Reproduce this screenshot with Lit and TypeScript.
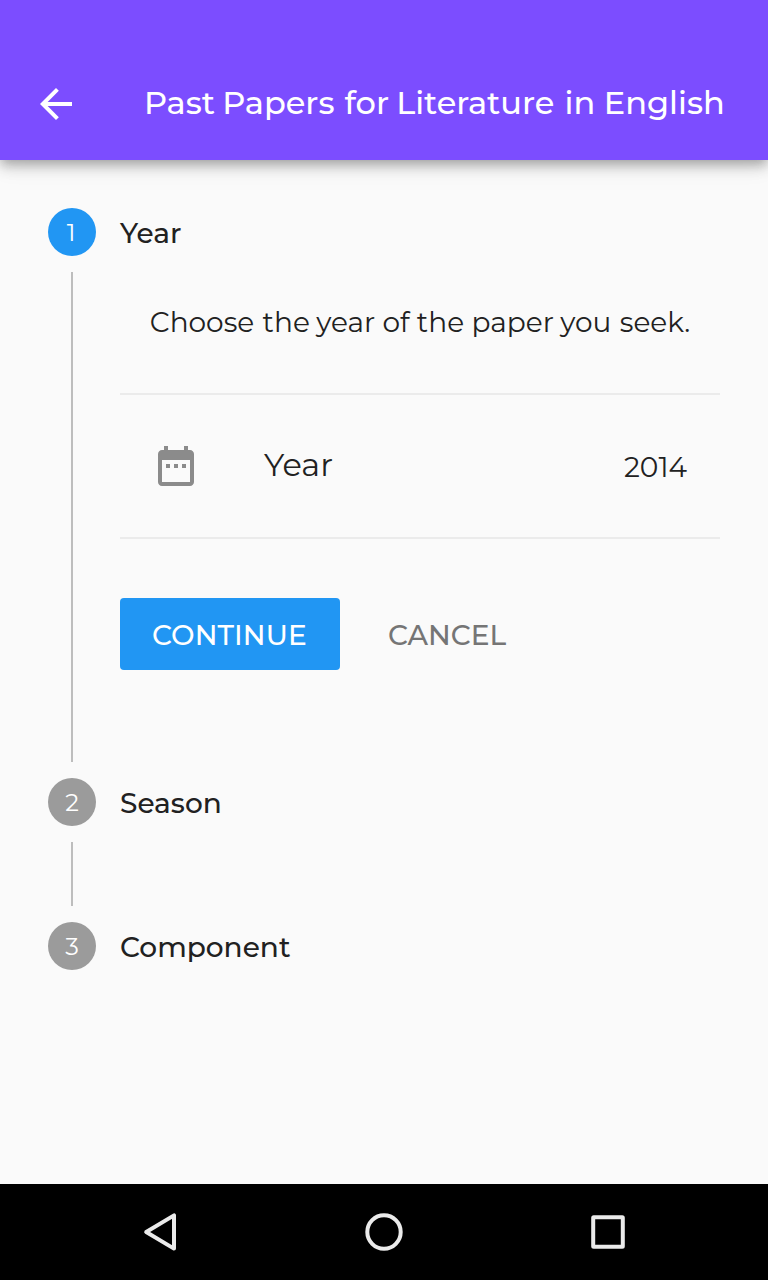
import { LitElement, html, css } from "lit";
import { customElement } from "lit/decorators.js";

@customElement("app-root")
export class AppRoot extends LitElement {
  static styles = css`
    :host {
      display: flex;
      flex-direction: column;
      height: 100vh;
      min-height: 1280px;
      background: #fafafa;
      color: #212121;
      font-family: Montserrat, Inter, sans-serif;
      font-size: 28px;
      line-height: 34px;
      white-space: nowrap;
    }
    * { box-sizing: border-box; }
    svg { display: block; flex: none; }
    .bar {
      display: flex;
      align-items: center;
      height: 160px;
      padding: 48px 32px 0;
      background: #7c4dff;
      color: #fff;
      box-shadow: 0 4px 10px -2px rgba(0,0,0,.2), 0 8px 12px rgba(0,0,0,.14), 0 2px 24px rgba(0,0,0,.12);
    }
    .title {
      margin: 0 0 2px 64px;
      font-size: 32px;
      line-height: 40px;
      font-weight: 500;
    }
    .title .tight { word-spacing: -1.5px; }
    .title .loose { word-spacing: 1.5px; }
    .hint .tight { word-spacing: -1px; }
    .hint .loose { word-spacing: 1px; }
    .steps { flex: 1; padding: 48px; }
    .step { display: grid; grid-template-columns: 48px 1fr; column-gap: 24px; }
    .rail { display: flex; flex-direction: column; align-items: center; }
    .dot {
      width: 48px;
      height: 48px;
      border-radius: 50%;
      background: #9b9b9b;
      color: #fff;
      font-size: 24px;
      font-weight: 400;
      line-height: 49px;
      text-align: center;
    }
    .dot.on { padding-right: 2px; background: #2196f3; }
    .line { flex: 1; width: 2px; margin: 16px 0; background: #bdbdbd; }
    .name { height: 48px; line-height: 50px; font-weight: 500; }
    .first { height: 570px; }
    .second { height: 144px; }
    .hint { padding: 49px 0 54px; text-align: center; font-weight: 400; }
    .field {
      display: flex;
      align-items: center;
      height: 146px;
      padding: 0 33px 0 32px;
      border-top: 2px solid #ebebeb;
      border-bottom: 2px solid #ebebeb;
      font-weight: 400;
    }
    .label { flex: 1; margin: 0 0 2px 64px; font-size: 32px; }
    .value { margin-top: 2px; }
    .actions { display: flex; padding-top: 59px; font-weight: 500; }
    .btn {
      height: 72px;
      border: 0;
      padding: 2px 32px 0;
      background: none;
      font: inherit;
      text-align: left;
      color: #757575;
    }
    .btn.main { width: 220px; margin-right: 16px; border-radius: 4px; background: #2196f3; color: #fff; letter-spacing: 0.1px; }
    .nav {
      display: flex;
      justify-content: center;
      align-items: center;
      gap: 176px;
      height: 96px;
      background: #000;
    }
    .nav svg { fill: none; stroke: #ebebeb; stroke-width: 4; stroke-linejoin: round; }
  `;

  render() {
    return html`
      <header class="bar">
        <svg width="48" height="48" viewBox="0 0 24 24" fill="#fff"><path d="M20 11H7.83l5.59-5.59L12 4l-8 8 8 8 1.41-1.41L7.83 13H20v-2z"/></svg>
        <div class="title"><span class="tight">Past </span><span class="loose">Papers </span><span class="tight">for </span><span class="loose">Literature </span>in English</div>
      </header>
      <main class="steps">
        <section class="step first">
          <div class="rail"><div class="dot on">1</div><div class="line"></div></div>
          <div>
            <div class="name">Year</div>
            <div class="hint"><span class="loose">Choose </span><span class="tight">the </span>year of the <span class="tight">paper </span><span class="loose">you </span>seek.</div>
            <div class="field">
              <svg width="48" height="48" viewBox="0 0 24 24" fill="#8b8b8b"><path d="M9 11H7v2h2v-2zm4 0h-2v2h2v-2zm4 0h-2v2h2v-2zm2-7h-1V2h-2v2H8V2H6v2H5c-1.11 0-1.99.9-1.99 2L3 20c0 1.1.89 2 2 2h14c1.1 0 2-.9 2-2V6c0-1.1-.9-2-2-2zm0 16H5V9h14v11z"/></svg>
              <span class="label">Year</span><span class="value">2014</span>
            </div>
            <div class="actions">
              <button class="btn main">CONTINUE</button><button class="btn">CANCEL</button>
            </div>
          </div>
        </section>
        <section class="step second">
          <div class="rail"><div class="dot">2</div><div class="line"></div></div>
          <div class="name">Season</div>
        </section>
        <section class="step">
          <div class="rail"><div class="dot">3</div></div>
          <div class="name">Component</div>
        </section>
      </main>
      <nav class="nav">
        <svg width="48" height="48" viewBox="0 0 48 48"><path d="M38 7.4V40.6L10.2 24Z"/></svg>
        <svg width="48" height="48" viewBox="0 0 48 48"><circle cx="24" cy="24" r="16.7"/></svg>
        <svg width="48" height="48" viewBox="0 0 48 48"><rect x="9.2" y="9.2" width="29.6" height="29.6" rx="0.5"/></svg>
      </nav>
    `;
  }
}
